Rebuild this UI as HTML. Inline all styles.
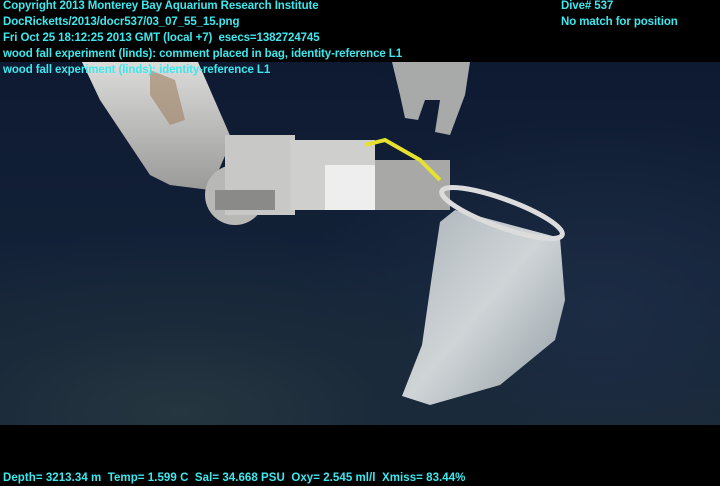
<!DOCTYPE html>
<html><head><meta charset="utf-8"><style>
html,body{margin:0;padding:0;background:#000;}
#w{position:relative;width:720px;height:486px;overflow:hidden;background:#000;}
#img{position:absolute;left:0;top:62px;width:720px;height:363px;
background:radial-gradient(ellipse 420px 180px at 180px 350px,#263640 0%,#1a2a3a 50%,rgba(0,0,0,0) 100%),
radial-gradient(ellipse 300px 200px at 600px 250px,#1c2c44 0%,rgba(0,0,0,0) 100%),
linear-gradient(#0e1a32,#132238 60%,#1c2a36);}
.t{position:absolute;left:3px;color:#3ee8ee;font:bold 11.5px/16px "Liberation Sans",sans-serif;letter-spacing:-0.1px;white-space:nowrap;}
</style></head><body><div id="w">
<div id="img"></div>
<svg style="position:absolute;left:0;top:0" width="720" height="486">
<defs>
<linearGradient id="m" x1="0" y1="0" x2="0" y2="1"><stop offset="0" stop-color="#dcdcda"/><stop offset="1" stop-color="#9a9a9a"/></linearGradient>
<linearGradient id="b" x1="0" y1="0" x2="1" y2="1"><stop offset="0" stop-color="#b8c0c4"/><stop offset="0.5" stop-color="#dfe3e4"/><stop offset="1" stop-color="#9aa6ac"/></linearGradient>
</defs>
<polygon points="82,62 198,62 232,140 210,190 170,185 150,175 100,100" fill="url(#m)"/>
<polygon points="150,70 175,80 185,120 170,125 150,95" fill="#a08060" opacity="0.6"/>
<circle cx="235" cy="195" r="30" fill="#b8b8b6"/>
<rect x="225" y="135" width="70" height="80" fill="#c8c8c6"/>
<rect x="215" y="190" width="60" height="20" fill="#8a8a88"/>
<rect x="290" y="140" width="85" height="70" fill="#cfcfce"/>
<rect x="325" y="165" width="50" height="45" fill="#eeeeee"/>
<rect x="375" y="160" width="75" height="50" fill="#a8a8a6"/>
<polyline points="365,145 385,140 420,160 440,180" stroke="#e6e030" stroke-width="4" fill="none"/>
<polygon points="392,62 470,62 465,95 450,135 435,132 440,100 425,100 418,120 405,118 400,95" fill="#a8aaaa"/>
<polygon points="455,210 560,238 565,300 555,340 500,385 430,405 402,396 422,345 432,275 440,222" fill="url(#b)" opacity="0.92"/>
<ellipse cx="502" cy="213" rx="64" ry="14" transform="rotate(20 502 213)" fill="none" stroke="#dcdcdc" stroke-width="5"/>
</svg>
<div class="t" style="top:-2px">Copyright 2013 Monterey Bay Aquarium Research Institute</div>
<div class="t" style="top:14px">DocRicketts/2013/docr537/03_07_55_15.png</div>
<div class="t" style="top:30px">Fri Oct 25 18:12:25 2013 GMT (local +7)&nbsp; esecs=1382724745</div>
<div class="t" style="top:46px">wood fall experiment (linds): comment placed in bag, identity-reference L1</div>
<div class="t" style="top:62px">wood fall experiment (linds): identity-reference L1</div>
<div class="t" style="left:561px;top:-2px">Dive# 537</div>
<div class="t" style="left:561px;top:14px">No match for position</div>
<div class="t" style="top:470px;letter-spacing:0.05px">Depth= 3213.34 m&nbsp; Temp= 1.599 C&nbsp; Sal= 34.668 PSU&nbsp; Oxy= 2.545 ml/l&nbsp; Xmiss= 83.44%</div>
</div></body></html>
